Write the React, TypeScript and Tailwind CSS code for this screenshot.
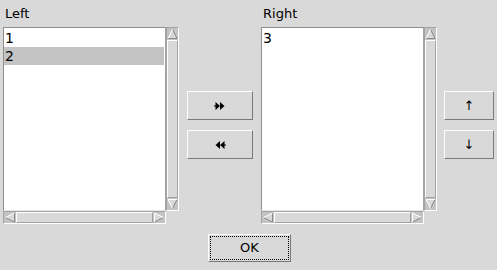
import React from 'react';

const font = { fontFamily: '"DejaVu Sans", "Liberation Sans", sans-serif' };

function Arrow({ dir }: { dir: 'up' | 'down' | 'left' | 'right' }) {
  // triangle inside an 11x12 (or 12x11) cell, white lit edge and grey shade edge
  const shapes = {
    up: { w: 11, h: 12, pts: '5.5,1.5 1,10.5 10,10.5', lit: '1,10.5 5.5,1.5', dark: '5.5,1.5 10,10.5 1,10.5' },
    down: { w: 11, h: 12, pts: '1,1.5 10,1.5 5.5,10.5', lit: '5.5,10.5 1,1.5 10,1.5', dark: '10,1.5 5.5,10.5' },
    left: { w: 12, h: 11, pts: '1.5,5.5 10.5,1 10.5,10', lit: '10.5,1 1.5,5.5', dark: '1.5,5.5 10.5,10 10.5,1' },
    right: { w: 12, h: 11, pts: '1.5,1 10.5,5.5 1.5,10', lit: '1.5,10 1.5,1 10.5,5.5', dark: '10.5,5.5 1.5,10' },
  }[dir];
  return (
    <svg width={shapes.w} height={shapes.h} className="block shrink-0 bg-[#c3c3c3]">
      <polygon points={shapes.pts} fill="#d9d9d9" />
      <polyline points={shapes.dark} fill="none" stroke="#8a8a8a" strokeWidth="1" />
      <polyline points={shapes.lit} fill="none" stroke="#ffffff" strokeWidth="1" />
    </svg>
  );
}

function VScroll() {
  return (
    <div className="flex h-full w-[13px] flex-col border border-t-[#a3a3a3] border-l-[#a3a3a3] border-b-white border-r-white bg-[#c3c3c3]">
      <Arrow dir="up" />
      <div className="flex-1 border border-t-white border-l-white border-b-[#a3a3a3] border-r-[#a3a3a3] bg-[#d9d9d9]" />
      <Arrow dir="down" />
    </div>
  );
}

function HScroll() {
  return (
    <div className="flex h-[13px] w-full flex-row border border-t-[#a3a3a3] border-l-[#a3a3a3] border-b-white border-r-white bg-[#c3c3c3]">
      <Arrow dir="left" />
      <div className="flex-1 border border-t-white border-l-white border-b-[#a3a3a3] border-r-[#a3a3a3] bg-[#d9d9d9]" />
      <Arrow dir="right" />
    </div>
  );
}

function ListPanel({ label, items, selected }: { label: string; items: string[]; selected?: number }) {
  return (
    <div className="flex w-[176px] flex-col">
      <div className="h-[27px] pl-[2px] pt-[6px] text-[13px] leading-[15px] text-black">{label}</div>
      <div className="grid grid-cols-[163px_13px] grid-rows-[184px_13px]">
        <div className="border border-t-[#8f8f8f] border-l-[#8f8f8f] border-r-[#a3a3a3] border-b-[#e6e6e6] bg-white pt-[1px]">
          {items.map((it, i) => (
            <div
              key={it}
              className={`h-[18px] pl-[1px] text-[14px] leading-[18px] text-black ${i === selected ? 'mr-[1px] bg-[#c3c3c3]' : ''}`}
            >
              {it}
            </div>
          ))}
        </div>
        <VScroll />
        <HScroll />
        <div />
      </div>
    </div>
  );
}

function Btn({ w, children }: { w: string; children: React.ReactNode }) {
  return (
    <div
      className={`flex h-[29px] ${w} items-center justify-center border border-t-white border-l-white border-b-[#7a7a7a] border-r-[#7a7a7a] bg-[#d9d9d9] text-[13px] text-black`}
    >
      {children}
    </div>
  );
}

function DoubleRight() {
  return (
    <svg width="12" height="8" viewBox="0 0 12 8">
      <rect x="0" y="3.5" width="2" height="1" fill="#000" />
      <polygon points="1.5,0 6,4 1.5,8" fill="#000" />
      <polygon points="6,0 10.5,4 6,8" fill="#000" />
    </svg>
  );
}

function DoubleLeft() {
  return (
    <svg width="12" height="8" viewBox="0 0 12 8">
      <rect x="10" y="3.5" width="2" height="1" fill="#000" />
      <polygon points="10.5,0 6,4 10.5,8" fill="#000" />
      <polygon points="6,0 1.5,4 6,8" fill="#000" />
    </svg>
  );
}

export default function App() {
  return (
    <div className="h-[270px] w-[497px] overflow-hidden bg-[#d9d9d9]" style={font}>
      <div className="flex flex-row pl-[3px]">
        <ListPanel label="Left" items={['1', '2']} selected={1} />
        <div className="ml-[8px] flex w-[66px] flex-col gap-[10px] pt-[91px]">
          <Btn w="w-[66px]">
            <DoubleRight />
          </Btn>
          <Btn w="w-[66px]">
            <DoubleLeft />
          </Btn>
        </div>
        <div className="ml-[8px]">
          <ListPanel label="Right" items={['3']} />
        </div>
        <div className="ml-[7px] flex w-[50px] flex-col gap-[10px] pt-[91px]">
          <Btn w="w-[50px]">↑</Btn>
          <Btn w="w-[50px]">↓</Btn>
        </div>
      </div>
      <div className="mt-[10px] flex justify-center pl-[2px]">
        <div className="flex h-[28px] w-[83px] items-center justify-center border border-t-white border-l-white border-b-[#7a7a7a] border-r-[#7a7a7a] bg-[#d9d9d9] p-[1px]">
          <div className="flex h-full w-full items-center justify-center border border-dotted border-black text-[13px] text-black">
            OK
          </div>
        </div>
      </div>
    </div>
  );
}
